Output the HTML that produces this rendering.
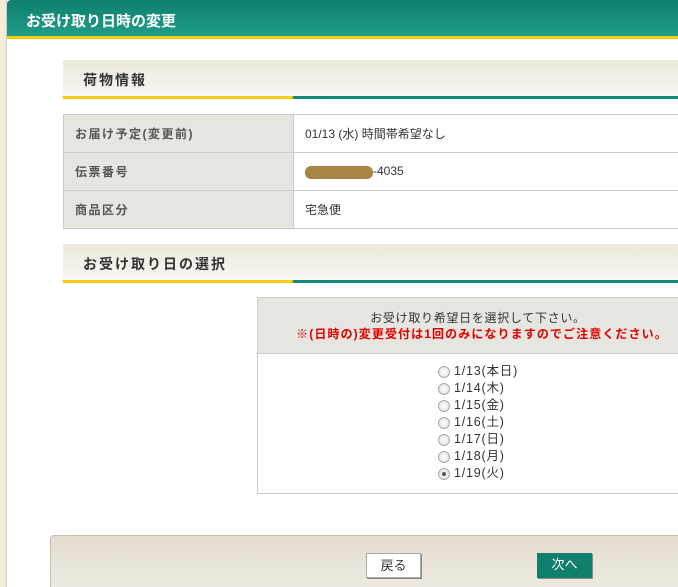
<!DOCTYPE html>
<html><head><meta charset="utf-8"><style>
*{margin:0;padding:0;box-sizing:border-box}
html,body{width:678px;height:587px;overflow:hidden}
body{background:#fff;font-family:"Liberation Sans","Noto Sans CJK JP",sans-serif;font-size:12px;color:#333;position:relative}
.abs{position:absolute}
.strip{left:0;top:0;width:7px;height:587px;background:#f3ecd9;border-right:1px solid #ccc}
.top{left:7px;top:0;width:671px;height:36px;background:linear-gradient(#0f7f6e,#1f9d89);color:#fff;font-size:15px;font-weight:bold;padding:10px 0 0 19px;border-radius:4px 0 0 0}
.topline{left:7px;top:36px;width:671px;height:3px;background:#f5cc00}
.sec{left:63px;width:615px;height:36px;background:linear-gradient(#ece8dc,#f8f6f1);font-size:14px;font-weight:bold;color:#333;padding:10px 0 0 20px;letter-spacing:2px}
.ul{left:63px;height:3px;width:615px;background:linear-gradient(90deg,#f5cc00 0,#f5cc00 230px,#0f8a74 230px)}
table{position:absolute;left:63px;top:114px;width:616px;border-collapse:collapse}
td{border:1px solid #ccc;height:38px;padding-left:11px}
td.l{width:230px;background:#e7e5df;font-weight:bold;color:#555;letter-spacing:1.5px}
.box{left:257px;top:297px;width:422px;height:197px;border:1px solid #ccc}
.bh{height:56px;background:#e7e5df;border-bottom:1px solid #ccc;text-align:center;padding-top:12px;line-height:16px;letter-spacing:0.7px;white-space:nowrap}
.g{margin-left:20px}
.r{font-weight:bold;color:#e00000;letter-spacing:1.1px;margin-left:28px}
.rad{left:438px;line-height:17px;font-size:12.5px;letter-spacing:0.8px}
.rad div{display:flex;align-items:center}
.c{display:inline-block;width:12px;height:12px;border-radius:50%;border:1px solid #aaa;background:radial-gradient(#fff,#ddd);margin-right:4px;position:relative}
.c.on::after{content:"";position:absolute;left:3px;top:3px;width:4px;height:4px;border-radius:50%;background:#555}
.foot{left:50px;top:535px;width:630px;height:60px;border:1px solid #c9bfae;border-radius:4px 0 0 0;background:linear-gradient(#e3ddd0,#efebe2)}
.b{top:553px;height:25px;width:55px;font-size:13px;text-align:center;line-height:23px}
</style></head><body>
<div class="abs strip"></div>
<div class="abs top">お受け取り日時の変更</div>
<div class="abs topline"></div>
<div class="abs sec" style="top:60px">荷物情報</div>
<div class="abs ul" style="top:96px"></div>
<table>
<tr><td class="l">お届け予定(変更前)</td><td>01/13 (水) 時間帯希望なし</td></tr>
<tr><td class="l">伝票番号</td><td><span style="display:inline-block;width:68px;height:13px;background:#a88545;border-radius:6px;vertical-align:middle"></span>-4035</td></tr>
<tr><td class="l">商品区分</td><td>宅急便</td></tr>
</table>
<div class="abs sec" style="top:244px">お受け取り日の選択</div>
<div class="abs ul" style="top:280px"></div>
<div class="abs box"><div class="bh"><span class="g">お受け取り希望日を選択して下さい。</span><br><span class="r">※(日時の)変更受付は1回のみになりますのでご注意ください。</span></div></div>
<div class="abs rad" style="top:363px">
<div><span class="c"></span>1/13(本日)</div>
<div><span class="c"></span>1/14(木)</div>
<div><span class="c"></span>1/15(金)</div>
<div><span class="c"></span>1/16(土)</div>
<div><span class="c"></span>1/17(日)</div>
<div><span class="c"></span>1/18(月)</div>
<div><span class="c on"></span>1/19(火)</div>
</div>
<div class="abs foot"></div>
<div class="abs b" style="left:366px;background:#fff;border:1px solid #aaa;box-shadow:1px 1px 0 #888">戻る</div>
<div class="abs b" style="left:537px;background:#0f7f6e;color:#fff;box-shadow:1px 1px 0 #888">次へ</div>
</body></html>
